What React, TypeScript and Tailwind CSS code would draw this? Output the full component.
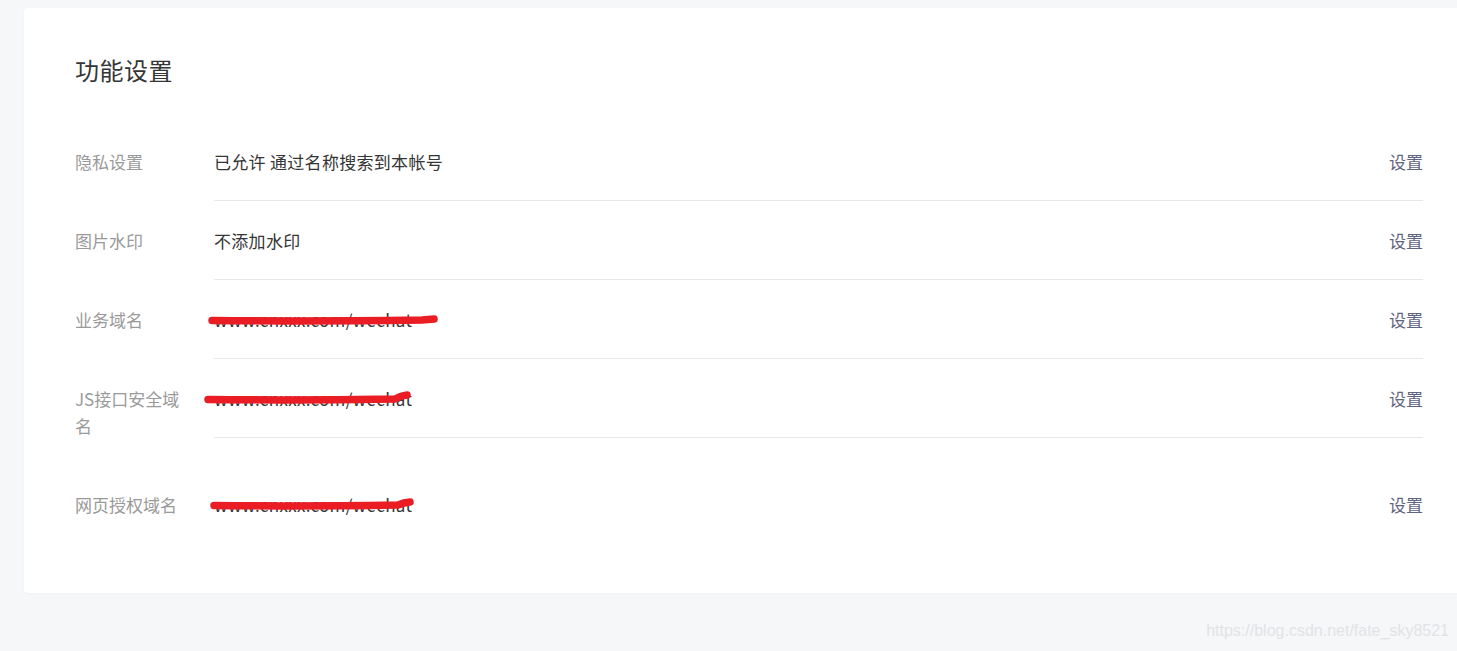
const font = { fontFamily: '"Noto Sans CJK SC", "Liberation Sans", sans-serif' };

type Row = {
  label: string;
  value: string;
  masked?: { from: number; to: number; lift?: number };
};

const rows: Row[] = [
  { label: '隐私设置', value: '已允许 通过名称搜索到本帐号' },
  { label: '图片水印', value: '不添加水印' },
  { label: '业务域名', value: 'www.cnxxx.com/wechat', masked: { from: -2, to: 220 } },
  { label: 'JS接口安全域名', value: 'www.cnxxx.com/wechat', masked: { from: -6, to: 193, lift: 3 } },
  { label: '网页授权域名', value: 'www.cnxxx.com/wechat', masked: { from: 0, to: 196, lift: 2 } },
];

// red marker stroke drawn over the domain text
const Scribble = ({ from, to, lift = 0 }: { from: number; to: number; lift?: number }) => (
  <svg
    className="absolute left-0 top-1/2 -translate-y-1/2 overflow-visible pointer-events-none"
    width={to}
    height={12}
    viewBox={`0 0 ${to} 12`}
  >
    <path
      d={`M${from} 6.5 C ${to * 0.3} 7.2, ${to * 0.6} 7, ${to - 12} 6 Q ${to - 6} ${5.5 - lift}, ${to} ${5 - lift}`}
      stroke="#ea1c24"
      strokeWidth={7.5}
      strokeLinecap="round"
      fill="none"
    />
  </svg>
);

export default function App() {
  return (
    <div className="min-h-screen bg-[#f6f7f9] pt-2 pl-6" style={font}>
      <div className="bg-white rounded-l-[4px] shadow-[0_1px_3px_rgba(0,0,0,0.03)] pl-[51px] pr-[34px] pt-[42px] pb-[49px]">
        <h2 className="text-[24px] leading-[40px] tracking-[0.5px] text-[#353535] mb-[32px]">功能设置</h2>

        <div className="flex flex-col">
          {rows.map((row, i) => (
            <div key={row.label} className="flex items-start">
              <div className="w-[110px] mr-[29px] py-[26px] text-[17px] leading-[27px] text-[#9a9a9a]">
                {row.label}
              </div>
              <div
                className={`flex-1 flex items-center justify-between pt-[26px] pb-[25px] text-[17px] leading-[27px] ${
                  i < rows.length - 1 ? 'border-b border-[#e7e8eb]' : 'pb-[26px]'
                }`}
              >
                <span className="relative text-[#353535] tracking-[0.3px]">
                  {row.value}
                  {row.masked && <Scribble {...row.masked} />}
                </span>
                <button className="text-[#5f6480] text-[17px] leading-[27px]">设置</button>
              </div>
            </div>
          ))}
        </div>
      </div>
      <div className="flex justify-end pr-2 pt-[26px]">
        <span className="text-[16px] text-[#e2e3e6]" style={{ fontFamily: '"Liberation Sans", sans-serif' }}>
          https://blog.csdn.net/fate_sky8521
        </span>
      </div>
    </div>
  );
}
